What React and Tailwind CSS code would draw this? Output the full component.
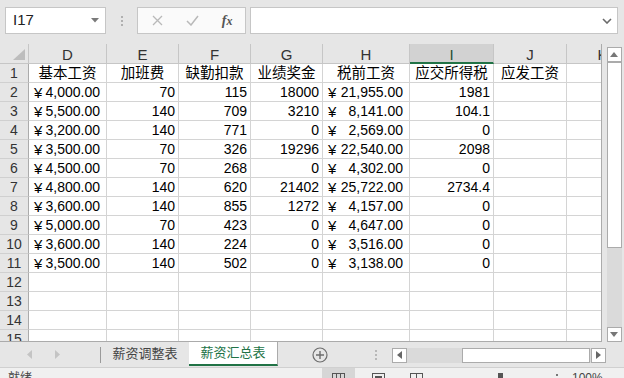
import React from "react";

const colW = ["w-[78px]", "w-[72px]", "w-[72px]", "w-[72px]", "w-[87px]", "w-[84px]", "w-[73px]", "w-[72px]"];
const letters = ["D", "E", "F", "G", "H", "I", "J", "K"];
const heads = ["基本工资", "加班费", "缺勤扣款", "业绩奖金", "税前工资", "应交所得税", "应发工资", ""];
const data = [
  ["4,000.00", "70", "115", "18000", "21,955.00", "1981"],
  ["5,500.00", "140", "709", "3210", "8,141.00", "104.1"],
  ["3,200.00", "140", "771", "0", "2,569.00", "0"],
  ["3,500.00", "70", "326", "19296", "22,540.00", "2098"],
  ["4,500.00", "70", "268", "0", "4,302.00", "0"],
  ["4,800.00", "140", "620", "21402", "25,722.00", "2734.4"],
  ["3,600.00", "140", "855", "1272", "4,157.00", "0"],
  ["5,000.00", "70", "423", "0", "4,647.00", "0"],
  ["3,600.00", "140", "224", "0", "3,516.00", "0"],
  ["3,500.00", "140", "502", "0", "3,138.00", "0"],
];

function Cell({ i, children, className = "" }) {
  return (
    <div className={`${colW[i]} shrink-0 h-[19px] border-r border-b border-[#d4d4d4] bg-white ${className}`}>
      {children}
    </div>
  );
}

function Row({ n }) {
  let cells;
  if (n === 1) {
    cells = heads.map((h, i) => (
      <Cell key={i} i={i} className="text-center text-[14.5px]">{h}</Cell>
    ));
  } else if (n >= 2 && n <= 11) {
    const d = data[n - 2];
    cells = [];
    for (let i = 0; i < 8; i++) {
      if (i === 0 || i === 4) {
        cells.push(
          <Cell key={i} i={i} className="flex justify-between pl-[5px] pr-[6px]">
            <span className="text-[15px]">¥</span>
            <span>{d[i]}</span>
          </Cell>
        );
      } else if (i < 6) {
        cells.push(
          <Cell key={i} i={i} className="text-right pr-[3px]">{d[i]}</Cell>
        );
      } else {
        cells.push(<Cell key={i} i={i} />);
      }
    }
  } else {
    cells = colW.map((_, i) => <Cell key={i} i={i} />);
  }
  return (
    <div className="flex h-[19px] leading-[19px]">
      <div className="w-[29px] shrink-0 h-[19px] text-center bg-[#e6e6e6] text-[#333] border-r border-b border-r-[#ababab] border-b-[#d0d0d0]">
        {n}
      </div>
      {cells}
    </div>
  );
}

export default function App() {
  const rows = [];
  for (let n = 1; n <= 15; n++) rows.push(<Row key={n} n={n} />);
  return (
    <div className="w-[624px] h-[378px] overflow-hidden bg-[#e6e6e6] flex flex-col font-['Liberation_Sans','Noto_Sans_CJK_SC',sans-serif] text-[14px] text-black">
      {/* formula bar */}
      <div className="h-[44px] shrink-0 flex items-start pt-[7px] pl-[5px]">
        <div className="w-[101px] h-[27px] bg-white border border-[#c6c6c6] flex items-center justify-between pl-[7px] pr-[6px] text-[#222]">
          <span className="text-[15px]">I17</span>
          <svg width="8" height="5" viewBox="0 0 8 5"><path d="M0 0 L8 0 L4 4.5 Z" fill="#7a7a7a" /></svg>
        </div>
        <div className="w-[31px] h-[27px] flex flex-col items-center justify-center gap-[2px]">
          <div className="w-[2px] h-[2px] bg-[#b0b0b0]" />
          <div className="w-[2px] h-[2px] bg-[#b0b0b0]" />
          <div className="w-[2px] h-[2px] bg-[#b0b0b0]" />
        </div>
        <div className="w-[109px] h-[27px] bg-[#fafafa] border border-[#c6c6c6] flex items-center">
          <div className="w-[38px] flex justify-center pl-[1px]">
            <svg width="11" height="11" viewBox="0 0 11 11"><path d="M1 1 L10 10 M10 1 L1 10" stroke="#b9b9b9" strokeWidth="1.3" /></svg>
          </div>
          <div className="w-[34px] flex justify-center">
            <svg width="13" height="11" viewBox="0 0 13 11"><path d="M1 6 L5 10 L12 1" stroke="#b9b9b9" strokeWidth="1.5" fill="none" /></svg>
          </div>
          <div className="w-[36px] flex justify-center font-['Liberation_Serif',serif] italic text-[14px] text-[#555] font-bold">
            <span className="leading-none">f<span className="text-[12px]">x</span></span>
          </div>
        </div>
        <div className="ml-[4px] w-[368px] h-[27px] bg-white border border-[#c6c6c6] flex items-center justify-end pr-[5px]">
          <svg width="10" height="6" viewBox="0 0 10 6"><path d="M1 1 L5 5 L9 1" stroke="#6a6a6a" strokeWidth="1.6" fill="none" /></svg>
        </div>
      </div>

      {/* grid + vertical scrollbar */}
      <div className="h-[298px] shrink-0 flex">
        <div className="w-[602px] shrink-0 overflow-hidden border-r border-b border-[#ababab] bg-white">
          <div className="flex h-[20px] bg-[#e6e6e6] text-[#333] text-[15px]">
            <div className="w-[29px] shrink-0 h-[20px] border-r border-b border-[#c6c6c6] flex items-end justify-end pr-[3px] pb-[3px]">
              <svg width="12" height="11" viewBox="0 0 12 11"><path d="M12 0 L12 11 L0 11 Z" fill="#bdbdbd" /></svg>
            </div>
            {letters.map((l, i) => (
              <div
                key={l}
                className={`${colW[i]} shrink-0 h-[20px] border-r border-[#c6c6c6] text-center leading-[19px] pt-[1px] ${
                  l === "I" ? "bg-[#d2d2d2] border-b-2 border-b-[#217346] text-[#1f4f33]" : "border-b"
                }`}
              >
                {l}
              </div>
            ))}
          </div>
          {rows}
        </div>
        <div className="flex-1 flex flex-col items-center pt-[3px] pl-[2px]">
          <div className="w-[15px] h-[15px] bg-white border border-[#ababab] flex items-center justify-center">
            <svg width="8" height="5" viewBox="0 0 8 5"><path d="M0 5 L8 5 L4 0 Z" fill="#777" /></svg>
          </div>
          <div className="w-[15px] flex-1 bg-[#dadada] flex flex-col">
            <div className="h-[186px] bg-white border border-[#ababab]" />
          </div>
          <div className="w-[15px] h-[15px] bg-white border border-[#ababab] flex items-center justify-center">
            <svg width="8" height="5" viewBox="0 0 8 5"><path d="M0 0 L8 0 L4 5 Z" fill="#777" /></svg>
          </div>
        </div>
      </div>

      {/* sheet tabs */}
      <div className="h-[25px] shrink-0 flex items-stretch text-[13px]">
        <div className="w-[100px] flex items-center pl-[27px]">
          <svg width="5" height="9" viewBox="0 0 5 9"><path d="M5 0 L5 9 L0 4.5 Z" fill="#c4c4c4" /></svg>
          <div className="w-[23px]" />
          <svg width="5" height="9" viewBox="0 0 5 9"><path d="M0 0 L0 9 L5 4.5 Z" fill="#c4c4c4" /></svg>
        </div>
        <div className="w-[1px] h-[16px] mt-[5px] bg-[#9a9a9a]" />
        <div className="w-[88px] flex items-center justify-center text-[#444] pb-[1px]">薪资调整表</div>
        <div className="w-[89px] bg-white border-r border-[#ababab] border-b-2 border-b-[#217346] flex items-center justify-center text-[#217346] h-[24px]">
          薪资汇总表
        </div>
        <div className="w-[34px]" />
        <div className="w-[16px] flex items-center">
          <svg width="16" height="16" viewBox="0 0 16 16">
            <circle cx="8" cy="8" r="7" stroke="#6d6d6d" strokeWidth="1.2" fill="none" />
            <path d="M8 4 V12 M4 8 H12" stroke="#6d6d6d" strokeWidth="1.4" />
          </svg>
        </div>
        <div className="w-[64px] flex items-center pl-[47px]">
          <div className="flex flex-col gap-[2px]">
            <div className="w-[2px] h-[2px] bg-[#b8b8b8]" />
            <div className="w-[2px] h-[2px] bg-[#b8b8b8]" />
            <div className="w-[2px] h-[2px] bg-[#b8b8b8]" />
          </div>
        </div>
        <div className="flex items-center pt-[1px]">
          <div className="w-[15px] h-[15px] bg-white border border-[#ababab] flex items-center justify-center">
            <svg width="5" height="8" viewBox="0 0 5 8"><path d="M5 0 L5 8 L0 4 Z" fill="#666" /></svg>
          </div>
          <div className="w-[184px] h-[15px] bg-[#dadada] flex pl-[55px]">
            <div className="w-[128px] h-[15px] bg-white border border-[#ababab]" />
          </div>
          <div className="w-[15px] h-[15px] bg-white border border-[#ababab] flex items-center justify-center">
            <svg width="5" height="8" viewBox="0 0 5 8"><path d="M0 0 L0 8 L5 4 Z" fill="#666" /></svg>
          </div>
        </div>
      </div>

      {/* status bar */}
      <div className="flex-1 border-t border-[#d0d0d0] bg-[#f0f0f0] relative overflow-hidden text-[12px] text-[#444]">
        <div className="flex items-start h-full">
          <div className="pl-[8px] pt-[3px] leading-[14px] w-[322px]">就绪</div>
          <div className="w-[33px] h-full bg-[#d6d6d6] flex justify-center pt-[5px]">
            <div className="w-[13px] h-[8px] border border-[#555] flex justify-evenly">
              <div className="w-[1px] bg-[#555]" />
              <div className="w-[1px] bg-[#555]" />
            </div>
          </div>
          <div className="w-[17px]" />
          <div className="pt-[5px]">
            <div className="w-[13px] h-[8px] border border-[#555] p-[2px]">
              <div className="w-full h-full border border-[#555]" />
            </div>
          </div>
          <div className="w-[25px]" />
          <div className="pt-[5px]">
            <div className="w-[13px] h-[8px] border border-[#555] flex justify-center">
              <div className="w-[1px] bg-[#555]" />
            </div>
          </div>
          <div className="w-[75px]" />
          <div className="pt-[5px]">
            <div className="w-[5px] h-[8px] bg-[#555]" />
          </div>
          <div className="w-[53px]" />
          <div className="pt-[6px]">
            <div className="w-[2px] h-[2px] bg-[#777]" />
          </div>
          <div className="w-[14px]" />
          <div className="pt-[3px] leading-[14px]">100%</div>
        </div>
      </div>
    </div>
  );
}
